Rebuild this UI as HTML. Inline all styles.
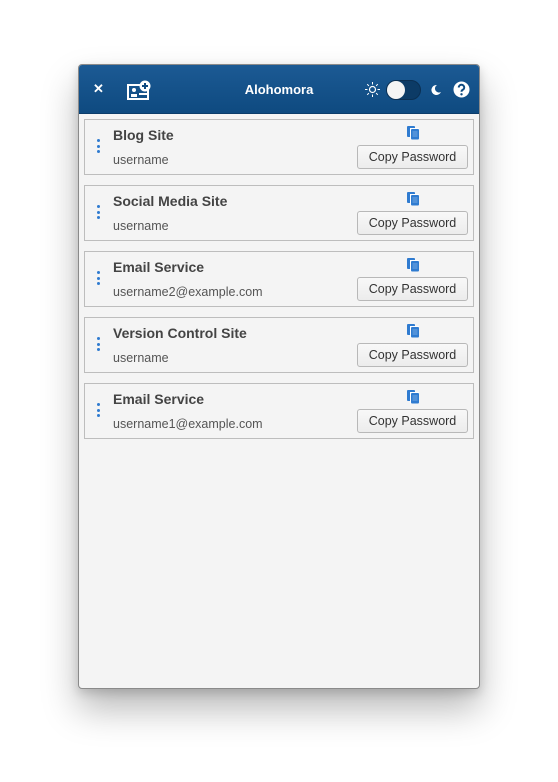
<!DOCTYPE html>
<html><head><meta charset="utf-8"><style>
*{box-sizing:border-box;margin:0;padding:0}
body{width:558px;height:782px;background:#fff;font-family:"Liberation Sans",sans-serif;position:relative;overflow:hidden}
.win{position:absolute;left:78px;top:64px;width:402px;height:625px;background:#f4f4f4;border:1px solid #8a8a8a;border-radius:4px;box-shadow:0 20px 36px rgba(0,0,0,.28),0 4px 10px rgba(0,0,0,.15);overflow:hidden}
.hdr{position:absolute;left:0;top:0;width:100%;height:49px;background:linear-gradient(#1c5a94,#0e4a80);border-bottom:1px solid #0b3c6a}
.title{position:absolute;left:0;width:100%;top:17px;text-align:center;color:#fff;font-weight:bold;font-size:13px}
.x{position:absolute;left:14px;top:16px;color:#fff;font-size:13px;font-weight:bold}
.card{position:absolute;left:5px;width:390px;height:56px;border:1px solid #bdbdbd;background:#f4f4f4}
.dots{position:absolute;left:12px;top:19px;width:4px}
.dots i{display:block;width:3px;height:3px;border-radius:50%;background:#2f7bd0;margin-bottom:2.5px}
.name{position:absolute;left:28px;top:7px;font-size:14px;font-weight:bold;color:#444}
.user{position:absolute;left:28px;top:33px;font-size:12.5px;color:#555}
.btn{position:absolute;left:272px;top:25px;width:111px;height:24px;border:1px solid #b8b8b8;border-radius:3px;background:linear-gradient(#f8f8f8,#ececec);font-size:12.5px;color:#333;text-align:center;line-height:22px}
.cp{position:absolute;left:321px;top:5px}
</style></head><body>
<div class="win">
<div class="hdr">
<div class="x">✕</div>
<svg style="position:absolute;left:48px;top:15px" width="25" height="21" viewBox="0 0 25 21"><rect x="1" y="5" width="20" height="14" fill="none" stroke="#fff" stroke-width="2"/><circle cx="7" cy="10" r="2" fill="#fff"/><path d="M4 17v-3h6v3z" fill="#fff"/><rect x="12" y="13" width="8" height="2" fill="#fff"/><circle cx="18" cy="6" r="5.5" fill="#fff"/><path d="M18 3v6M15 6h6" stroke="#0e4a80" stroke-width="2"/></svg>
<div class="title">Alohomora</div>
<svg style="position:absolute;left:286px;top:17px" width="15" height="15" viewBox="0 0 15 15"><circle cx="7.5" cy="7.5" r="3" fill="none" stroke="#fff" stroke-width="1.2"/><path d="M7.5 0v2.5M7.5 12.5v2.5M0 7.5h2.5M12.5 7.5h2.5M2.2 2.2l1.7 1.7M11.1 11.1l1.7 1.7M2.2 12.8l1.7-1.7M11.1 3.9l1.7-1.7" stroke="#fff" stroke-width="1"/></svg>
<div style="position:absolute;left:307px;top:15px;width:35px;height:20px;border-radius:10px;background:#0c3b66;border:1px solid #0a2f52"></div>
<div style="position:absolute;left:308px;top:16px;width:18px;height:18px;border-radius:50%;background:#f4f4f4"></div>
<svg style="position:absolute;left:351px;top:19px" width="12" height="12" viewBox="0 0 12 12"><path d="M7 1a5 5 0 1 0 4 7a4 4 0 0 1-4-7z" fill="#fff"/></svg>
<svg style="position:absolute;left:374px;top:16px" width="17" height="17" viewBox="0 0 17 17"><circle cx="8.5" cy="8.5" r="8" fill="#fff"/><path d="M5.8 6.5a2.7 2.7 0 1 1 4 2.3c-.9.5-1.3 1-1.3 2" fill="none" stroke="#0e4a80" stroke-width="2"/><circle cx="8.5" cy="13.3" r="1.2" fill="#0e4a80"/></svg>
</div>
</div>
<style>.wrap{position:absolute;left:79px;top:65px}</style>
<div class="wrap">
<div class="card" style="top:54px"><div class="dots"><i></i><i></i><i></i></div><div class="name">Blog Site</div><div class="user">username</div><svg class="cp" width="14" height="15" viewBox="0 0 14 15"><rect x="1" y="1" width="8" height="11" rx="1" fill="#2f7bd0"/><rect x="4" y="3" width="9" height="11.5" fill="#fff"/><rect x="5" y="4" width="8" height="10.5" rx="1" fill="#2f7bd0"/><path d="M6.5 7h5M6.5 9h5M6.5 11h5" stroke="#8cbbe8" stroke-width=".7"/></svg><div class="btn">Copy Password</div></div>
<div class="card" style="top:120px"><div class="dots"><i></i><i></i><i></i></div><div class="name">Social Media Site</div><div class="user">username</div><svg class="cp" width="14" height="15" viewBox="0 0 14 15"><rect x="1" y="1" width="8" height="11" rx="1" fill="#2f7bd0"/><rect x="4" y="3" width="9" height="11.5" fill="#fff"/><rect x="5" y="4" width="8" height="10.5" rx="1" fill="#2f7bd0"/><path d="M6.5 7h5M6.5 9h5M6.5 11h5" stroke="#8cbbe8" stroke-width=".7"/></svg><div class="btn">Copy Password</div></div>
<div class="card" style="top:186px"><div class="dots"><i></i><i></i><i></i></div><div class="name">Email Service</div><div class="user">username2@example.com</div><svg class="cp" width="14" height="15" viewBox="0 0 14 15"><rect x="1" y="1" width="8" height="11" rx="1" fill="#2f7bd0"/><rect x="4" y="3" width="9" height="11.5" fill="#fff"/><rect x="5" y="4" width="8" height="10.5" rx="1" fill="#2f7bd0"/><path d="M6.5 7h5M6.5 9h5M6.5 11h5" stroke="#8cbbe8" stroke-width=".7"/></svg><div class="btn">Copy Password</div></div>
<div class="card" style="top:252px"><div class="dots"><i></i><i></i><i></i></div><div class="name">Version Control Site</div><div class="user">username</div><svg class="cp" width="14" height="15" viewBox="0 0 14 15"><rect x="1" y="1" width="8" height="11" rx="1" fill="#2f7bd0"/><rect x="4" y="3" width="9" height="11.5" fill="#fff"/><rect x="5" y="4" width="8" height="10.5" rx="1" fill="#2f7bd0"/><path d="M6.5 7h5M6.5 9h5M6.5 11h5" stroke="#8cbbe8" stroke-width=".7"/></svg><div class="btn">Copy Password</div></div>
<div class="card" style="top:318px"><div class="dots"><i></i><i></i><i></i></div><div class="name">Email Service</div><div class="user">username1@example.com</div><svg class="cp" width="14" height="15" viewBox="0 0 14 15"><rect x="1" y="1" width="8" height="11" rx="1" fill="#2f7bd0"/><rect x="4" y="3" width="9" height="11.5" fill="#fff"/><rect x="5" y="4" width="8" height="10.5" rx="1" fill="#2f7bd0"/><path d="M6.5 7h5M6.5 9h5M6.5 11h5" stroke="#8cbbe8" stroke-width=".7"/></svg><div class="btn">Copy Password</div></div>
</div>
</body></html>
